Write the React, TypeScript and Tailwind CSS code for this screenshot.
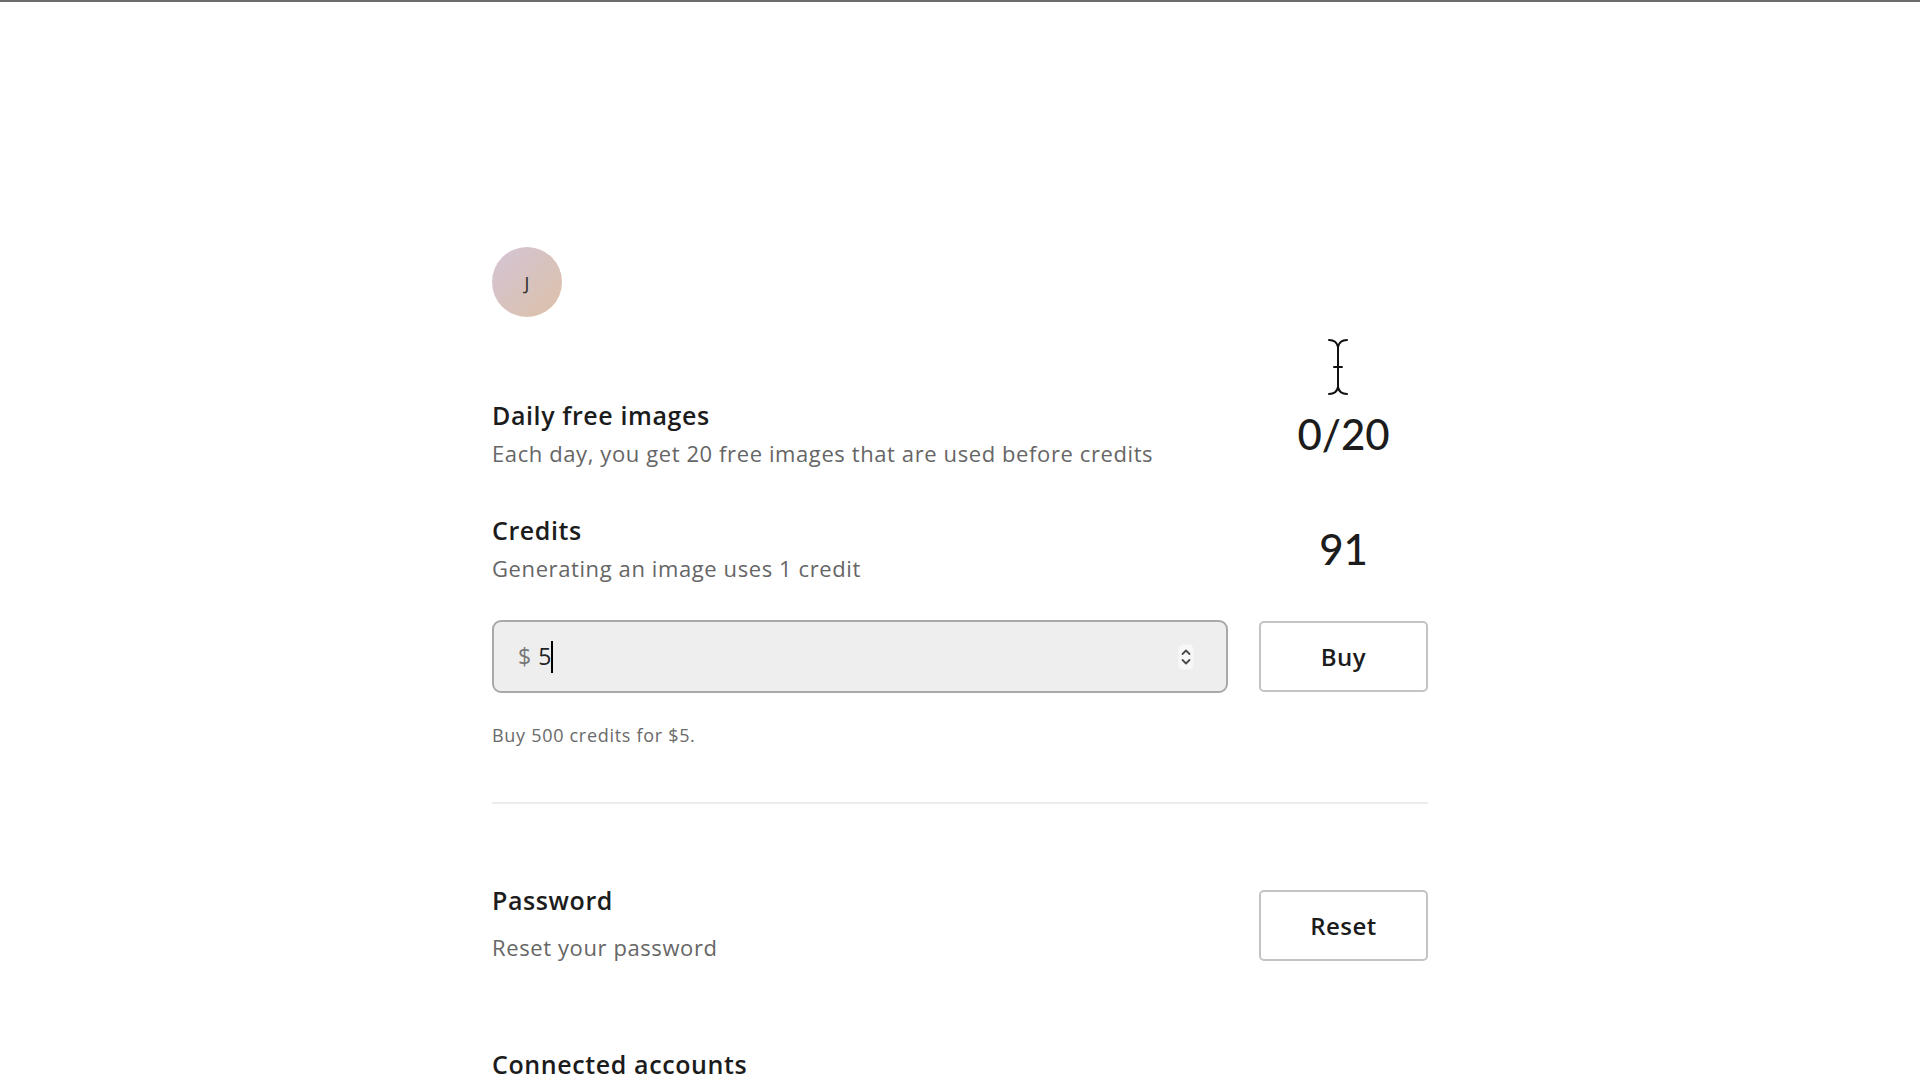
const Stepper = () => (
    <svg width="16" height="26" viewBox="0 0 16 26" fill="none">
        <rect x="0.5" y="0.5" width="15" height="25" rx="5" fill="#f8f8f8" />
        <path d="M4.5 10 L8 6.5 L11.5 10" stroke="#4a4a4a" strokeWidth="1.8" strokeLinecap="round" strokeLinejoin="round" />
        <path d="M4.5 16 L8 19.5 L11.5 16" stroke="#4a4a4a" strokeWidth="1.8" strokeLinecap="round" strokeLinejoin="round" />
    </svg>
);

const IBeam = () => (
    <svg width="24" height="60" viewBox="0 0 24 60" fill="none">
        <path d="M3 3 C8 3 11 5 12 10 C13 5 16 3 21 3 M12 10 V50 M3 57 C8 57 11 55 12 50 C13 55 16 57 21 57 M8 30 H16"
            stroke="#fff" strokeWidth="5" strokeLinecap="round" />
        <path d="M3 3 C8 3 11 5 12 10 C13 5 16 3 21 3 M12 10 V50 M3 57 C8 57 11 55 12 50 C13 55 16 57 21 57 M8 30 H16"
            stroke="#111" strokeWidth="2" strokeLinecap="round" />
    </svg>
);

const App = () => {
    return (
        <div className="relative min-h-screen h-[1080px] overflow-hidden bg-white border-t-2 border-[#6b6b6b] font-['Open_Sans','Noto_Sans',sans-serif] text-[#1c1c1c]">
            <div className="w-[936px] mx-auto pt-[245px] flex flex-col">
                <div className="w-[70px] h-[70px] rounded-full bg-gradient-to-br from-[#d4c4d6] to-[#dcc0a6] flex items-center justify-center pt-[2px] text-[18px] text-[#2a2a2a]">
                    J
                </div>

                <div className="mt-[83px] flex justify-between items-center">
                    <div className="flex flex-col">
                        <h2 className="text-[25px] leading-[30px] font-semibold tracking-[0.6px]">Daily free images</h2>
                        <p className="mt-[9px] text-[22px] leading-[28px] text-[#666] tracking-[0.6px]">Each day, you get 20 free images that are used before credits</p>
                    </div>
                    <div className="w-[169px] text-center text-[42px] leading-[50px] font-['Lato',sans-serif] font-medium">0/20</div>
                </div>

                <div className="mt-[48px] flex justify-between items-center">
                    <div className="flex flex-col">
                        <h2 className="text-[25px] leading-[30px] font-semibold tracking-[0.6px]">Credits</h2>
                        <p className="mt-[9px] text-[22px] leading-[28px] text-[#666] tracking-[0.6px]">Generating an image uses 1 credit</p>
                    </div>
                    <div className="w-[169px] text-center text-[42px] leading-[50px] font-['Lato',sans-serif] font-medium">91</div>
                </div>

                <div className="mt-[38px] flex gap-[31px] items-center">
                    <div className="flex-1 h-[73px] rounded-[9px] border-2 border-[#a9a9a9] bg-[#eeeeee] flex items-center pl-[24px] pr-[32px]">
                        <span className="text-[23px] text-[#777]">$</span>
                        <span className="ml-[7px] text-[23px] text-[#222]">5</span>
                        <span className="w-[2px] h-[32px] bg-black" />
                        <span className="ml-auto flex"><Stepper /></span>
                    </div>
                    <button className="w-[169px] h-[71px] rounded-[5px] border-2 border-[#c4c4c4] bg-white text-[24px] font-semibold tracking-[0.5px]">
                        Buy
                    </button>
                </div>

                <p className="mt-[30px] text-[18px] leading-[24px] text-[#6a6a6a] tracking-[0.7px]">Buy 500 credits for $5.</p>

                <div className="mt-[55px] h-[2px] bg-[#ececec]" />

                <div className="mt-[80px] flex justify-between items-center">
                    <div className="flex flex-col">
                        <h2 className="text-[25px] leading-[30px] font-semibold tracking-[0.6px]">Password</h2>
                        <p className="mt-[18px] text-[22px] leading-[28px] text-[#666] tracking-[0.6px]">Reset your password</p>
                    </div>
                    <button className="mt-[6px] w-[169px] h-[71px] rounded-[5px] border-2 border-[#c4c4c4] bg-white text-[24px] font-semibold tracking-[0.5px]">
                        Reset
                    </button>
                </div>

                <h2 className="mt-[88px] text-[25px] leading-[30px] font-semibold tracking-[0.6px]">Connected accounts</h2>
            </div>

            <div className="absolute left-[1326px] top-[335px] pointer-events-none">
                <IBeam />
            </div>
        </div>
    );
};

export default App;
